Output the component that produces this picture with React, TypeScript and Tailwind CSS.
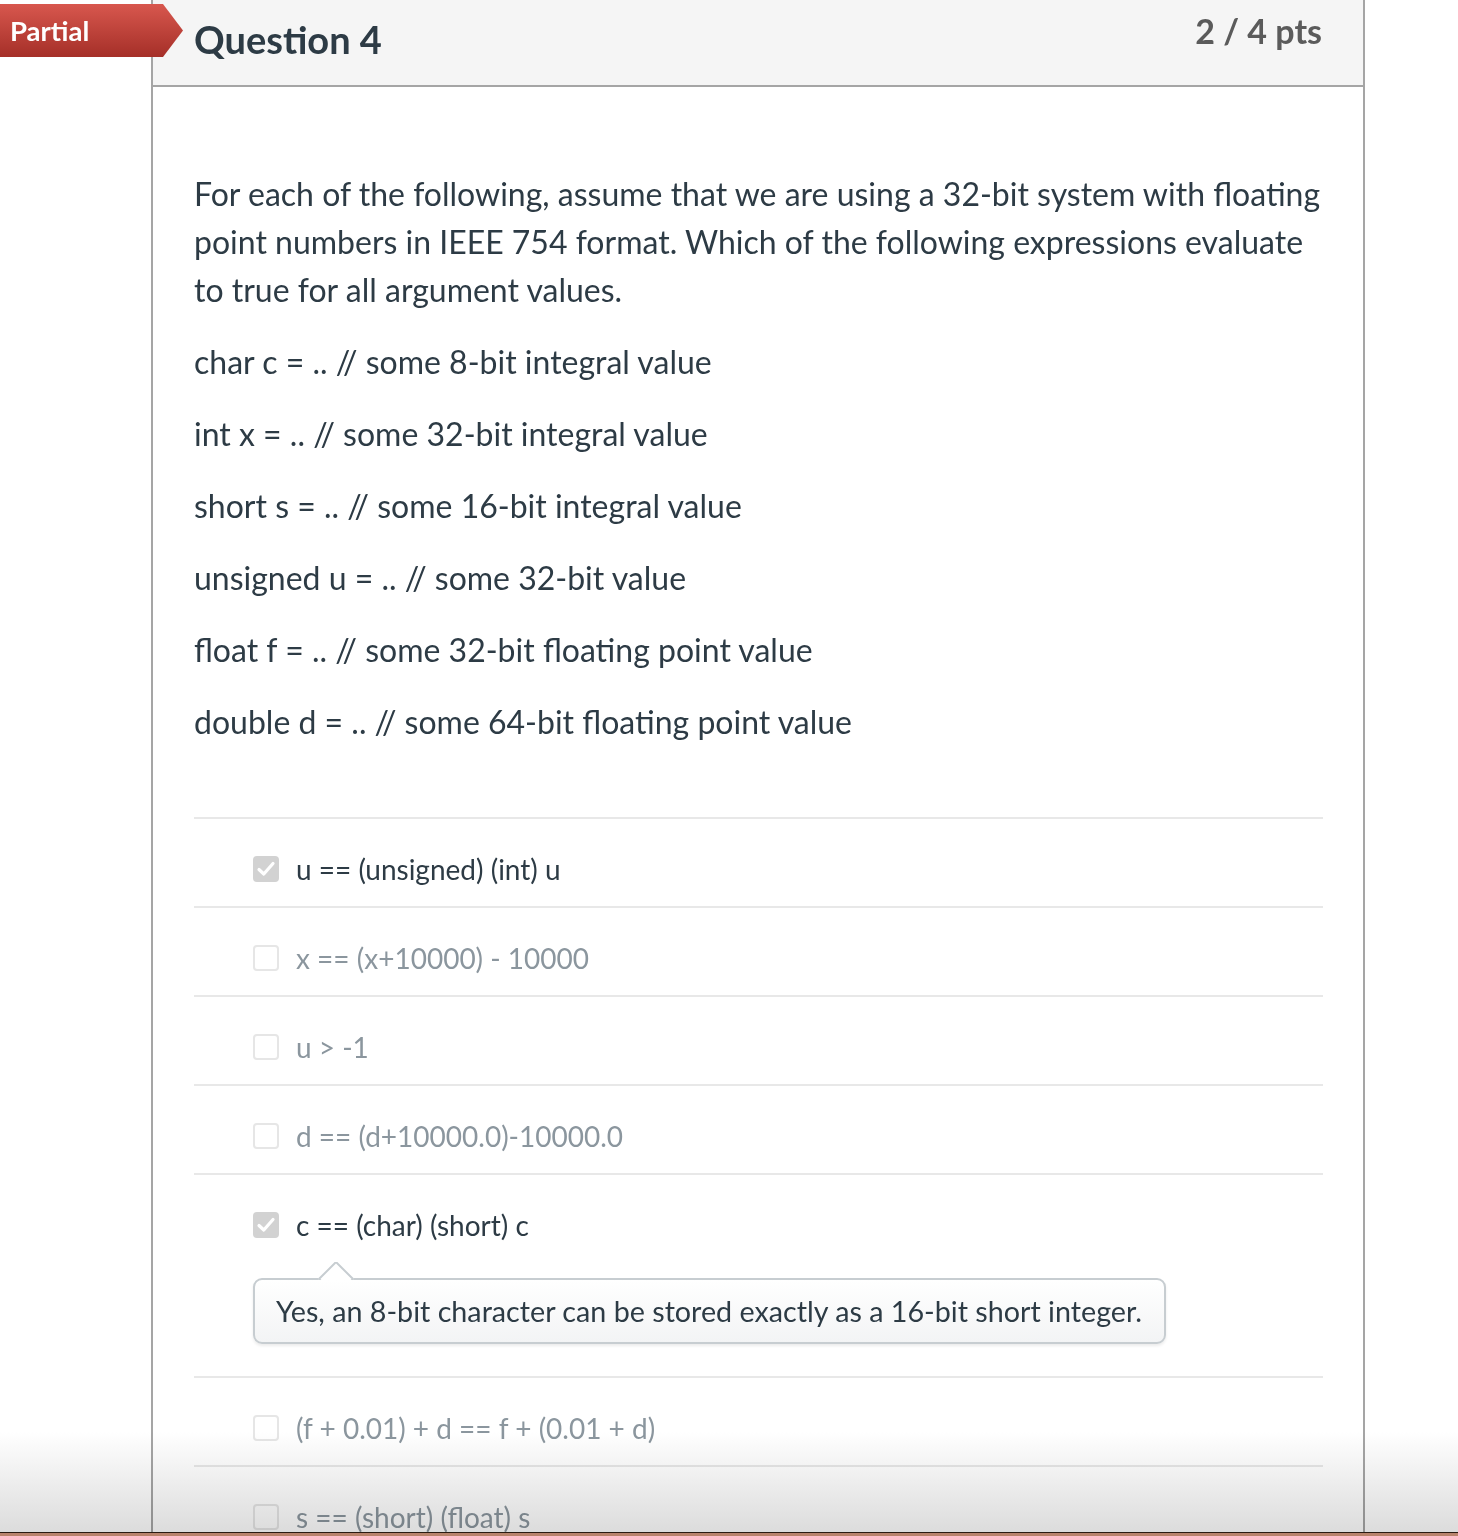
import React from "react";

const answers = [
  { text: "u == (unsigned) (int) u", checked: true },
  { text: "x == (x+10000) - 10000", checked: false },
  { text: "u > -1", checked: false },
  { text: "d == (d+10000.0)-10000.0", checked: false },
  {
    text: "c == (char) (short) c",
    checked: true,
    comment: "Yes, an 8-bit character can be stored exactly as a 16-bit short integer.",
  },
  { text: "(f + 0.01) + d == f + (0.01 + d)", checked: false },
  { text: "s == (short) (float) s", checked: false },
];

const decls = [
  "char c = .. // some 8-bit integral value",
  "int x = .. // some 32-bit integral value",
  "short s = .. // some 16-bit integral value",
  "unsigned u = .. // some 32-bit value",
  "float f = .. // some 32-bit floating point value",
  "double d = .. // some 64-bit floating point value",
];

function Checkbox({ checked }: { checked: boolean }) {
  if (checked) {
    return (
      <div className="w-[26px] h-[26px] rounded-[4px] bg-[#d2d2d2] flex items-center justify-center shrink-0">
        <svg width="22" height="22" viewBox="0 0 22 22">
          <path d="M4 11.5 L8.8 16 L18 5.5" fill="none" stroke="#fff" strokeWidth="3.2" strokeLinecap="round" strokeLinejoin="round" />
        </svg>
      </div>
    );
  }
  return <div className="w-[26px] h-[26px] rounded-[4px] border-2 border-[#e6e6e6] bg-white shrink-0" />;
}

export default function App() {
  return (
    <div className="relative h-[1536px] overflow-hidden bg-white font-['Lato','Noto_Sans',sans-serif] text-[#2d3b45]">
      <div className="ml-[151px] w-[1214px] border-x-2 border-[#a5a5a5] min-h-full">
        {/* header */}
        <div className="h-[87px] bg-[#f5f5f5] border-b-2 border-[#a5a5a5] flex justify-between pl-[41px] pr-[41px]">
          <h2 className="text-[38px] font-bold leading-none pt-[20px]">Question 4</h2>
          <div className="text-[34px] font-bold text-[#5b5b5b] leading-none pt-[14px]">2 / 4 pts</div>
        </div>

        {/* body */}
        <div className="pl-[41px] pr-[40px] pt-[83px]">
          <p className="text-[32px] leading-[48px]">
            For each of the following, assume that we are using a 32-bit system with floating point numbers in IEEE 754 format. Which of the following expressions evaluate to true for all argument values.
          </p>
          {decls.map((d) => (
            <p key={d} className="text-[32px] leading-[48px] mt-[24px]">
              {d}
            </p>
          ))}

          <div className="mt-[71px]">
            {answers.map((a) => (
              <div key={a.text} className="border-t-2 border-[#e8e8e8] pl-[59px] pt-[32px] pb-[19px]">
                <div className="flex items-center gap-[17px] h-[36px]">
                  <Checkbox checked={a.checked} />
                  <span className={"text-[28px] leading-[36px] " + (a.checked ? "text-[#2d3b45]" : "text-[#8b969e]")}>
                    {a.text}
                  </span>
                </div>
                {a.comment && (
                  <div className="relative mt-[35px] mb-[13px] w-[913px] h-[66px] rounded-[9px] border-2 border-[#c7cdd1] bg-gradient-to-b from-white to-[#f3f4f5] shadow-[0_2px_3px_rgba(0,0,0,0.08)] flex items-center pl-[21px]">
                    <div className="absolute -top-[18px] left-[63px] w-[36px] h-[18px] overflow-hidden">
                      <div className="absolute left-[5px] top-[4px] w-[26px] h-[26px] rotate-45 bg-white border-2 border-[#c7cdd1]" />
                    </div>
                    <span className="text-[28.7px] leading-none">{a.comment}</span>
                  </div>
                )}
              </div>
            ))}
          </div>
        </div>
      </div>

      {/* Partial ribbon */}
      <div className="absolute left-0 top-[4px] w-[183px] h-[53px] [clip-path:polygon(0_0,163px_0,183px_50%,163px_100%,0_100%)] bg-gradient-to-b from-[#d8574e] to-[#a52f28] flex items-center pl-[10px]">
        <span className="text-white font-bold text-[27.5px] leading-none">Partial</span>
      </div>

      {/* bottom window shade */}
      <div className="pointer-events-none absolute left-0 right-0 bottom-[4px] h-[100px] mix-blend-multiply bg-gradient-to-b from-white to-[#dcdcdc]" />
      <div className="absolute left-0 right-0 bottom-0 h-[4px] border-t-[1px] border-[#2a1b12] bg-[#b9836c]" />
    </div>
  );
}
